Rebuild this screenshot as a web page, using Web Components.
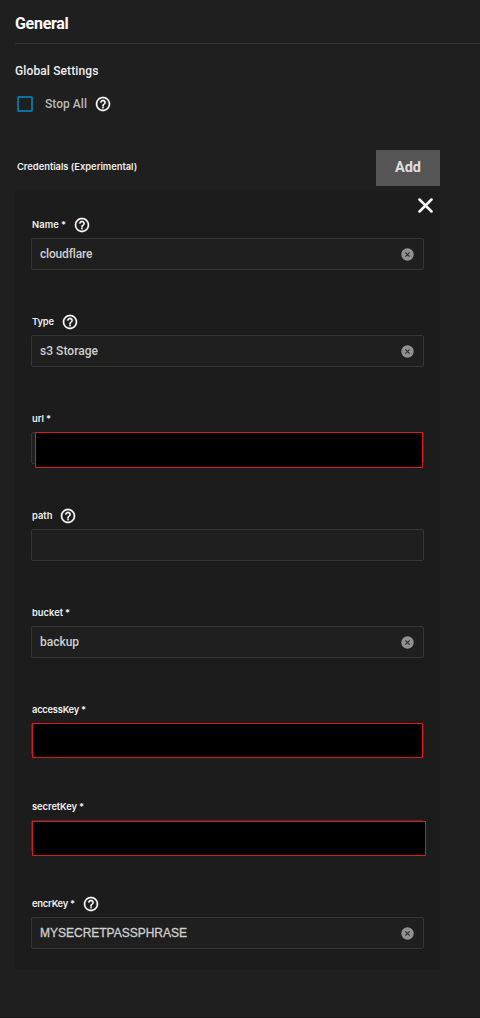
<!DOCTYPE html>
<html lang="en">
<head>
<meta charset="utf-8">
<title>General</title>
<style>
html,body{margin:0;background:#1f1f1f}
body{height:1018px;overflow:hidden;font-family:Roboto,"Liberation Sans",sans-serif}
</style>
</head>
<body>
<settings-page></settings-page>
<script>
const define=(name,html,setup)=>customElements.define(name,class extends HTMLElement{
  constructor(){super();this.attachShadow({mode:'open'}).innerHTML=html;}
  connectedCallback(){if(setup)setup(this,this.shadowRoot);}
});

// Text whose tracking is adjusted to fill the width given in "w"
define('fit-text',`<style>:host{display:block;white-space:nowrap;flex:none}span{display:inline-block}</style><span><slot></slot></span>`,
(el,root)=>{
  const w=+el.getAttribute('w'),s=root.querySelector('span'),n=el.textContent.length;
  const natural=s.getBoundingClientRect().width;
  s.style.letterSpacing=((w-natural)/n)+'px';
  el.style.width=w+'px';
});

define('help-icon',`<style>:host{display:block;flex:none;width:18px;height:18px}svg{display:block}</style>
<svg width="18" height="18" viewBox="-.6 -.6 25.2 25.2" fill="#fff" stroke="#fff" stroke-width=".35"><path d="M11 18h2v-2h-2v2zm1-16C6.48 2 2 6.48 2 12s4.48 10 10 10 10-4.48 10-10S17.52 2 12 2zm0 18c-4.41 0-8-3.59-8-8s3.59-8 8-8 8 3.59 8 8-3.59 8-8 8zm0-14c-2.21 0-4 1.79-4 4h2c0-1.1.9-2 2-2s2 .9 2 2c0 2-3 1.75-3 5h2c0-2.25 3-2.5 3-5 0-2.21-1.79-4-4-4z"/></svg>`);

define('clear-icon',`<style>:host{display:block;flex:none;width:13px;height:13px}svg{display:block}</style>
<svg width="13" height="13" viewBox="0 0 13 13"><circle cx="6.5" cy="6.5" r="6.2" fill="#919191"/><path d="M4.3 4.3l4.4 4.4M8.7 4.3L4.3 8.7" stroke="#333" stroke-width="1.2"/></svg>`);

define('check-box',`<style>:host{display:block;flex:none;box-sizing:border-box;width:16px;height:16px;border:2px solid #06729e;border-radius:1.5px}</style>`);

define('form-field',`<style>
:host{display:block;height:97px;position:relative}
.head{display:flex;align-items:center;height:26px;padding-left:1px;color:#f0f0f0;font:600 9.4px/14px Inter,sans-serif}
.head fit-text,.star{margin-top:-1px}
.star{width:5px;margin-left:2px}
help-icon{margin-left:6.5px}
.box{box-sizing:border-box;display:flex;align-items:center;justify-content:space-between;height:32px;border:1px solid #353535;border-radius:2px;background:#1f1f1f;padding:0 9.5px 0 8px;color:#cfcfcf;font:500 12px/16px Roboto,sans-serif}
.box.plain{font-family:"Liberation Sans",sans-serif;-webkit-text-stroke:.3px #cfcfcf}
clear-icon{margin-bottom:0}
</style><div class="head"></div><div class="box"></div><slot></slot>`,
(el,root)=>{
  const a=k=>el.getAttribute(k),h=root.querySelector('.head'),b=root.querySelector('.box');
  h.innerHTML=`<fit-text w="${a('lw')}">${a('label')}</fit-text>`+(el.hasAttribute('required')?'<span class="star">*</span>':'')+(el.hasAttribute('help')?'<help-icon></help-icon>':'');
  if(el.hasAttribute('plain'))b.classList.add('plain');
  if(a('value'))b.innerHTML=`<fit-text w="${a('vw')}">${a('value')}</fit-text><clear-icon></clear-icon>`;
});

define('redacted-area',`<style>:host{display:block;position:absolute;box-sizing:border-box;background:#000;border:1px solid #dc1a1a}</style>`);

define('credential-panel',`<style>
:host{display:block;box-sizing:border-box;position:relative;width:425px;height:779px;margin-left:15px;background:#1c1c1c;padding:22px 16px 0}
.close{position:absolute;left:403px;top:8px}
.url{left:4px;top:26px;width:388px;height:36px}
.access{left:1px;top:26px;width:391px;height:35px}
.secret{left:1px;top:27px;width:394px;height:35px}
</style>
<svg class="close" width="15" height="15" viewBox="0 0 15 15"><path d="M1.5 1.5l12 12M13.5 1.5l-12 12" stroke="#fff" stroke-width="2.5" stroke-linecap="round"/></svg>
<form-field label="Name" lw="27" required help value="cloudflare" vw="52"></form-field>
<form-field label="Type" lw="22" help value="s3 Storage" vw="58"></form-field>
<form-field label="url" lw="12" required><redacted-area class="url"></redacted-area></form-field>
<form-field label="path" lw="20.5" help></form-field>
<form-field label="bucket" lw="31" required value="backup" vw="39"></form-field>
<form-field label="accessKey" lw="47" required><redacted-area class="access"></redacted-area></form-field>
<form-field label="secretKey" lw="45" required><redacted-area class="secret"></redacted-area></form-field>
<form-field label="encrKey" lw="36" required help value="MYSECRETPASSPHRASE" vw="147" plain></form-field>`);

define('add-button',`<style>:host{display:flex;align-items:center;justify-content:center;width:64px;height:36px;background:#555;color:#dedede;font:700 14.5px/20px Roboto,sans-serif}</style><fit-text w="26">Add</fit-text>`);

define('settings-page',`<style>
:host{display:block;box-sizing:border-box;height:1018px;background:#1f1f1f;border-bottom:1px solid #171717;color:#eee;font-family:Roboto,sans-serif}
h1{box-sizing:border-box;margin:0 0 0 15px;height:44px;padding-top:13px;border-bottom:1px solid #353535;font-size:16px;line-height:22px;font-weight:700;color:#fafafa}
h2{margin:18px 0 0 15px;font-size:12px;line-height:18px;font-weight:500;height:18px}
.check{display:flex;align-items:center;height:18px;margin:15px 0 0 17px;color:#bababa;font-size:12px;line-height:18px;font-weight:500}
.check fit-text{margin-left:12px}.check help-icon{margin-left:7px}
.bar{display:flex;align-items:center;justify-content:space-between;margin:37px 0 4px 17px;width:423px;height:36px;font:600 9.4px/14px Inter,sans-serif}
.bar fit-text{margin-bottom:2px}
</style>
<h1><fit-text w="53.5">General</fit-text></h1>
<h2><fit-text w="83.5">Global Settings</fit-text></h2>
<div class="check"><check-box></check-box><fit-text w="42">Stop All</fit-text><help-icon></help-icon></div>
<div class="bar"><fit-text w="120">Credentials (Experimental)</fit-text><add-button></add-button></div>
<credential-panel></credential-panel>`);
</script>
</body>
</html>
